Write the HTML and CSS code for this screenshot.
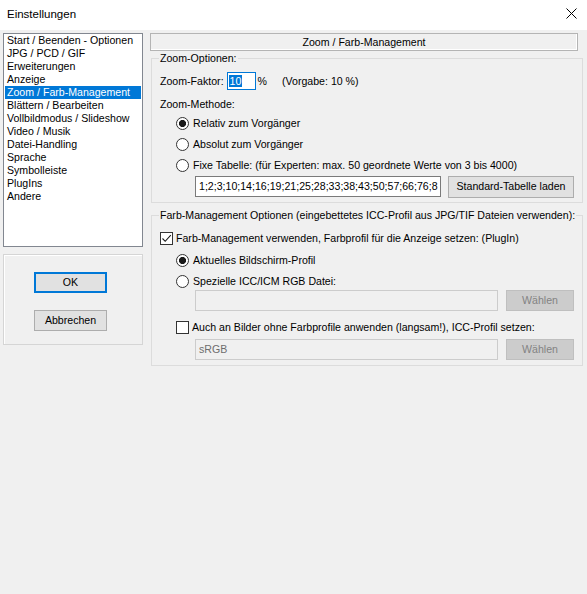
FILE: index.html
```html
<!DOCTYPE html>
<html lang="de">
<head>
<meta charset="utf-8">
<title>Einstellungen</title>
<link rel="stylesheet" href="styles.css">
</head>
<body>
<div class="window">
  <div class="titlebar">
    <span class="title">Einstellungen</span>
    <svg class="close" width="11" height="11" viewBox="0 0 11 11"><path d="M0.5 0.5 L10.5 10.5 M10.5 0.5 L0.5 10.5" stroke="#000" stroke-width="1" fill="none"/></svg>
  </div>
  <div class="body">
    <div class="left">
      <ul class="list">
        <li>Start / Beenden - Optionen</li>
        <li>JPG / PCD / GIF</li>
        <li>Erweiterungen</li>
        <li>Anzeige</li>
        <li class="selected">Zoom / Farb-Management</li>
        <li>Blättern / Bearbeiten</li>
        <li>Vollbildmodus / Slideshow</li>
        <li>Video / Musik</li>
        <li>Datei-Handling</li>
        <li>Sprache</li>
        <li>Symbolleiste</li>
        <li>PlugIns</li>
        <li>Andere</li>
      </ul>
      <div class="btnpanel">
        <button class="btn ok">OK</button>
        <button class="btn cancel">Abbrechen</button>
      </div>
    </div>
    <div class="right">
      <div class="header">Zoom / Farb-Management</div>
      <fieldset class="group zoomgroup">
        <legend>Zoom-Optionen:</legend>
        <div class="row factor">
          <span>Zoom-Faktor:</span>
          <span class="factor-input"><span class="sel">10</span></span>
          <span class="pct">%</span>
          <span class="hint">(Vorgabe: 10 %)</span>
        </div>
        <div class="row method">Zoom-Methode:</div>
        <div class="row opt r1"><span class="radio checked"></span><span>Relativ zum Vorgänger</span></div>
        <div class="row opt r2"><span class="radio"></span><span>Absolut zum Vorgänger</span></div>
        <div class="row opt r3"><span class="radio"></span><span>Fixe Tabelle: (für Experten: max. 50 geordnete Werte von 3 bis 4000)</span></div>
        <div class="row inputrow tablerow">
          <span class="textbox table">1;2;3;10;14;16;19;21;25;28;33;38;43;50;57;66;76;8</span>
          <button class="btn std">Standard-Tabelle laden</button>
        </div>
      </fieldset>
      <fieldset class="group farbgroup">
        <legend>Farb-Management Optionen (eingebettetes ICC-Profil aus JPG/TIF Dateien verwenden):</legend>
        <div class="row cb1"><span class="check checked"><svg width="11" height="11" viewBox="0 0 11 11"><path d="M1.5 5.5 L4.2 8.3 L9.8 2.2" stroke="#1a1a1a" stroke-width="1.1" fill="none"/></svg></span><span>Farb-Management verwenden, Farbprofil für die Anzeige setzen: (PlugIn)</span></div>
        <div class="row opt f1"><span class="radio checked"></span><span>Aktuelles Bildschirm-Profil</span></div>
        <div class="row opt f2"><span class="radio"></span><span>Spezielle ICC/ICM RGB Datei:</span></div>
        <div class="row inputrow icc1">
          <span class="textbox disabled"></span>
          <button class="btn disabledbtn">Wählen</button>
        </div>
        <div class="row opt cb2"><span class="check"></span><span>Auch an Bilder ohne Farbprofile anwenden (langsam!), ICC-Profil setzen:</span></div>
        <div class="row inputrow icc2">
          <span class="textbox disabled">sRGB</span>
          <button class="btn disabledbtn">Wählen</button>
        </div>
      </fieldset>
    </div>
  </div>
</div>
</body>
</html>
```
FILE: styles.css
```css
* { box-sizing: border-box; }
html, body { margin: 0; padding: 0; }
body {
  background: #f0f0f0;
  font-family: "Liberation Sans", Arial, sans-serif;
  font-size: 10.6px;
  color: #000;
}
.window {
  width: 587px;
  height: 594px;
  background: #f0f0f0;
  overflow: hidden;
}
.titlebar {
  height: 30px;
  background: #fff;
  display: flex;
  justify-content: space-between;
  align-items: flex-start;
  padding: 7px 10px 0 7px;
}
.title { font-size: 11.5px; line-height: 14px; }
.close { margin-top: 1px; }
.body {
  display: flex;
  gap: 7px;
  padding: 3px 0 0 3px;
}
.left {
  width: 140px;
  display: flex;
  flex-direction: column;
  gap: 7px;
}
.list {
  list-style: none;
  margin: 0;
  padding: 0;
  height: 214px;
  background: #fff;
  border: 1px solid #828790;
}
.list li {
  height: 13px;
  line-height: 13px;
  margin: 0 1px;
  padding-left: 2px;
  white-space: nowrap;
}
.list li.selected { background: #0078d7; color: #fff; }
.btnpanel {
  height: 91px;
  border: 1px solid #d5d5d5;
  box-shadow: inset 1px 1px 0 #fff;
  display: flex;
  flex-direction: column;
  align-items: flex-start;
  padding: 17px 0 0 30px;
  gap: 17px;
}
.btn {
  font: inherit;
  color: #000;
  background: #e1e1e1;
  border: 1px solid #adadad;
  padding: 0;
  margin: 0;
  height: 21px;
  line-height: 19px;
  text-align: center;
}
.btn.ok, .btn.cancel { width: 73px; }
.btn.ok { border: 2px solid #0078d7; line-height: 17px; }
.right {
  width: 433px;
  display: flex;
  flex-direction: column;
}
.header {
  width: 428px;
  height: 18px;
  line-height: 16px;
  text-align: center;
  border: 1px solid #b4b4b4;
  box-shadow: inset -1px -1px 0 #fff;
}
.group {
  margin: 1px 0 0 1px;
  padding: 0 8px 5px 8px;
  border: 1px solid #dcdcdc;
  min-width: 0;
  display: flex;
  flex-direction: column;
  align-items: flex-start;
}
.group legend {
  padding: 0 1px;
  margin-left: -1px;
  line-height: 13px;
  white-space: nowrap;
}
.row {
  display: flex;
  align-items: center;
  white-space: nowrap;
}
.opt, .cb1, .method { height: 13px; line-height: 13px; }
.factor { height: 18px; margin-top: 7px; }
.factor-input {
  width: 29px;
  height: 18px;
  margin-left: 3px;
  border: 1px solid #0078d7;
  background: #fff;
  padding: 2px 0 0 1px;
  line-height: 12px;
}
.sel { background: #0078d7; color: #fff; display: inline-block; padding: 0 1px; }
.pct { margin-left: 2px; }
.hint { margin-left: 15px; }
.method { margin-top: 8px; }
.opt { margin-left: 16px; }
.radio {
  width: 13px;
  height: 13px;
  border: 1px solid #333;
  border-radius: 50%;
  background: #fff;
  margin-right: 4px;
  flex: none;
}
.radio.checked {
  background: radial-gradient(circle, #1a1a1a 0 3.2px, #fff 3.9px);
}
.check {
  width: 13px;
  height: 13px;
  border: 1px solid #333;
  background: #fff;
  margin-right: 3px;
  flex: none;
  display: flex;
  align-items: center;
  justify-content: center;
}
.check svg { display: block; }
.r1 { margin-top: 6px; }
.r2 { margin-top: 8px; }
.r3 { margin-top: 8px; }
.inputrow { margin-left: 35px; height: 21px; }
.tablerow { margin-top: 4px; }
.textbox {
  height: 21px;
  line-height: 19px;
  border: 1px solid #7a7a7a;
  background: #fff;
  padding: 0 3px;
  overflow: hidden;
  white-space: nowrap;
}
.textbox.table { width: 246px; }
.btn.std { width: 126px; margin-left: 7px; height: 22px; }
.textbox.disabled {
  width: 303px;
  background: #f0f0f0;
  border-color: #cccccc;
  color: #6d6d6d;
}
.btn.disabledbtn {
  width: 68px;
  margin-left: 8px;
  background: #cccccc;
  border-color: #bfbfbf;
  color: #838383;
}
.farbgroup { margin-top: 6px; }
.cb1 { margin-top: 10px; }
.f1 { margin-top: 9px; }
.f2 { margin-top: 8px; }
.icc1 { margin-top: 2px; }
.cb2 { margin-top: 10px; }
.icc2 { margin-top: 5px; }
```
